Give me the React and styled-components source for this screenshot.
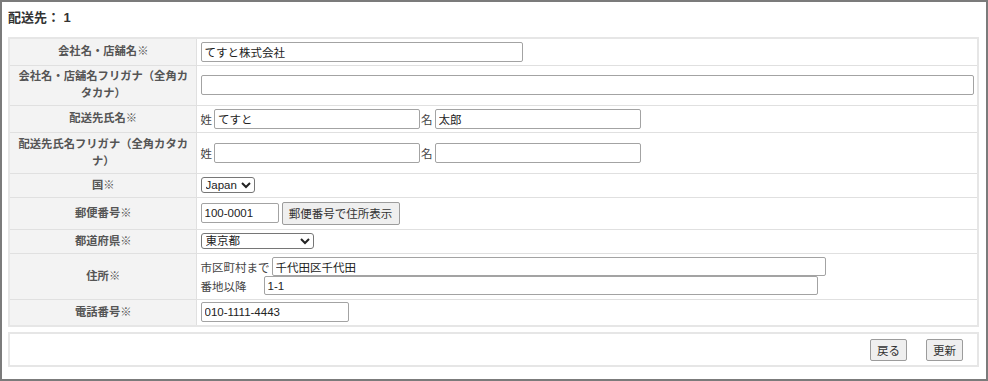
import React from 'react'
import styled, { createGlobalStyle } from 'styled-components'

const GlobalStyle = createGlobalStyle`
  html, body {
    margin: 0;
    padding: 0;
    background: #fff;
  }
  body {
    font-family: "Liberation Sans", "Noto Sans CJK JP", sans-serif;
    color: #222;
  }
`

const Frame = styled.div`
  width: 988px;
  height: 381px;
  box-sizing: border-box;
  border: 2px solid #7b7b7b;
  padding: 0 7px 0 6px;
  background: #fff;
`

const Title = styled.div`
  height: 35px;
  display: flex;
  align-items: center;
  font-size: 13px;
  font-weight: bold;
  color: #333;
  padding-bottom: 6px;
  box-sizing: border-box;
`

const Table = styled.table`
  width: 100%;
  border-collapse: collapse;
  border: 2px solid #e6e6e6;
  table-layout: fixed;
`

const Row = styled.tr`
  height: ${p => p.h}px;
`

const Label = styled.th`
  width: 187px;
  box-sizing: border-box;
  background: #f3f3f3;
  border: 1px solid #e0e0e0;
  padding: 0 5px 0 6px;
  font-size: 11.3px;
  line-height: 17px;
  font-weight: bold;
  color: #555;
  text-align: center;
  vertical-align: middle;
`

const Cell = styled.td`
  border: 1px solid #e0e0e0;
  padding: 0 4px;
  font-size: 11.5px;
  vertical-align: middle;
  color: #333;
`

const Line = styled.div`
  display: flex;
  align-items: center;
  height: ${p => p.h || 20}px;
`

const Text = styled.span`
  display: inline-block;
  width: ${p => (p.w ? `${p.w}px` : 'auto')};
  white-space: nowrap;
  font-size: 11.5px;
  color: #444;
`

const Input = styled.input`
  box-sizing: border-box;
  width: ${p => p.w}px;
  height: ${p => p.ht || 20}px;
  margin: 0 ${p => p.mr || 0}px 0 ${p => p.ml || 0}px;
  padding: 0 3px;
  border: 1px solid #a3a3a3;
  border-radius: 2px;
  font-family: "Liberation Sans", "Noto Sans CJK JP", sans-serif;
  font-size: 11.5px;
  color: #222;
  background: #fff;
  outline: none;
`

const Select = styled.select`
  box-sizing: border-box;
  width: ${p => (p.w ? `${p.w}px` : 'auto')};
  height: 16px;
  padding: 0;
  border: 1px solid #767676;
  border-radius: 3px;
  font-family: "Liberation Sans", "Noto Sans CJK JP", sans-serif;
  font-size: 11.5px;
  color: #222;
  background: #fff;
`

const Button = styled.button`
  box-sizing: border-box;
  height: ${p => p.ht || 22}px;
  width: ${p => p.w}px;
  margin-left: ${p => p.ml || 0}px;
  padding: 0;
  border: 1px solid #9c9c9c;
  border-radius: 2px;
  background: #efefef;
  font-family: "Liberation Sans", "Noto Sans CJK JP", sans-serif;
  font-size: 11.5px;
  color: #333;
`

const Footer = styled.div`
  margin-top: 5px;
  height: 35px;
  box-sizing: border-box;
  border: 2px solid #e6e6e6;
  display: flex;
  align-items: center;
  justify-content: flex-end;
  gap: 19px;
  padding-right: 14px;
`

export default function App() {
  return (
    <>
      <GlobalStyle />
      <Frame>
        <Title>配送先： 1</Title>
        <Table>
          <tbody>
            <Row h={27}>
              <Label>会社名・店舗名※</Label>
              <Cell>
                <Input w={322} defaultValue="てすと株式会社" />
              </Cell>
            </Row>
            <Row h={40}>
              <Label>会社名・店舗名フリガナ（全角カタカナ）</Label>
              <Cell>
                <Input w={773} />
              </Cell>
            </Row>
            <Row h={27}>
              <Label>配送先氏名※</Label>
              <Cell>
                <Line>
                  <Text>姓</Text>
                  <Input w={206} ml={2} mr={1} defaultValue="てすと" />
                  <Text>名</Text>
                  <Input w={206} ml={2} defaultValue="太郎" />
                </Line>
              </Cell>
            </Row>
            <Row h={41}>
              <Label>配送先氏名フリガナ（全角カタカナ）</Label>
              <Cell>
                <Line>
                  <Text>姓</Text>
                  <Input w={206} ml={2} mr={1} />
                  <Text>名</Text>
                  <Input w={206} ml={2} />
                </Line>
              </Cell>
            </Row>
            <Row h={24}>
              <Label>国※</Label>
              <Cell>
                <Select defaultValue="JP">
                  <option value="JP">Japan</option>
                </Select>
              </Cell>
            </Row>
            <Row h={32}>
              <Label>郵便番号※</Label>
              <Cell>
                <Line h={23}>
                  <Input w={78} defaultValue="100-0001" />
                  <Button w={118} ht={23} ml={3}>郵便番号で住所表示</Button>
                </Line>
              </Cell>
            </Row>
            <Row h={24}>
              <Label>都道府県※</Label>
              <Cell>
                <Select w={113} defaultValue="13">
                  <option value="13">東京都</option>
                </Select>
              </Cell>
            </Row>
            <Row h={46}>
              <Label>住所※</Label>
              <Cell>
                <Line h={19}>
                  <Text w={71}>市区町村まで</Text>
                  <Input w={554} ht={19} defaultValue="千代田区千代田" />
                </Line>
                <Line h={19}>
                  <Text w={63}>番地以降</Text>
                  <Input w={554} ht={19} defaultValue="1-1" />
                </Line>
              </Cell>
            </Row>
            <Row h={27}>
              <Label>電話番号※</Label>
              <Cell>
                <Input w={148} defaultValue="010-1111-4443" />
              </Cell>
            </Row>
          </tbody>
        </Table>
        <Footer>
          <Button w={37}>戻る</Button>
          <Button w={37}>更新</Button>
        </Footer>
      </Frame>
    </>
  )
}
